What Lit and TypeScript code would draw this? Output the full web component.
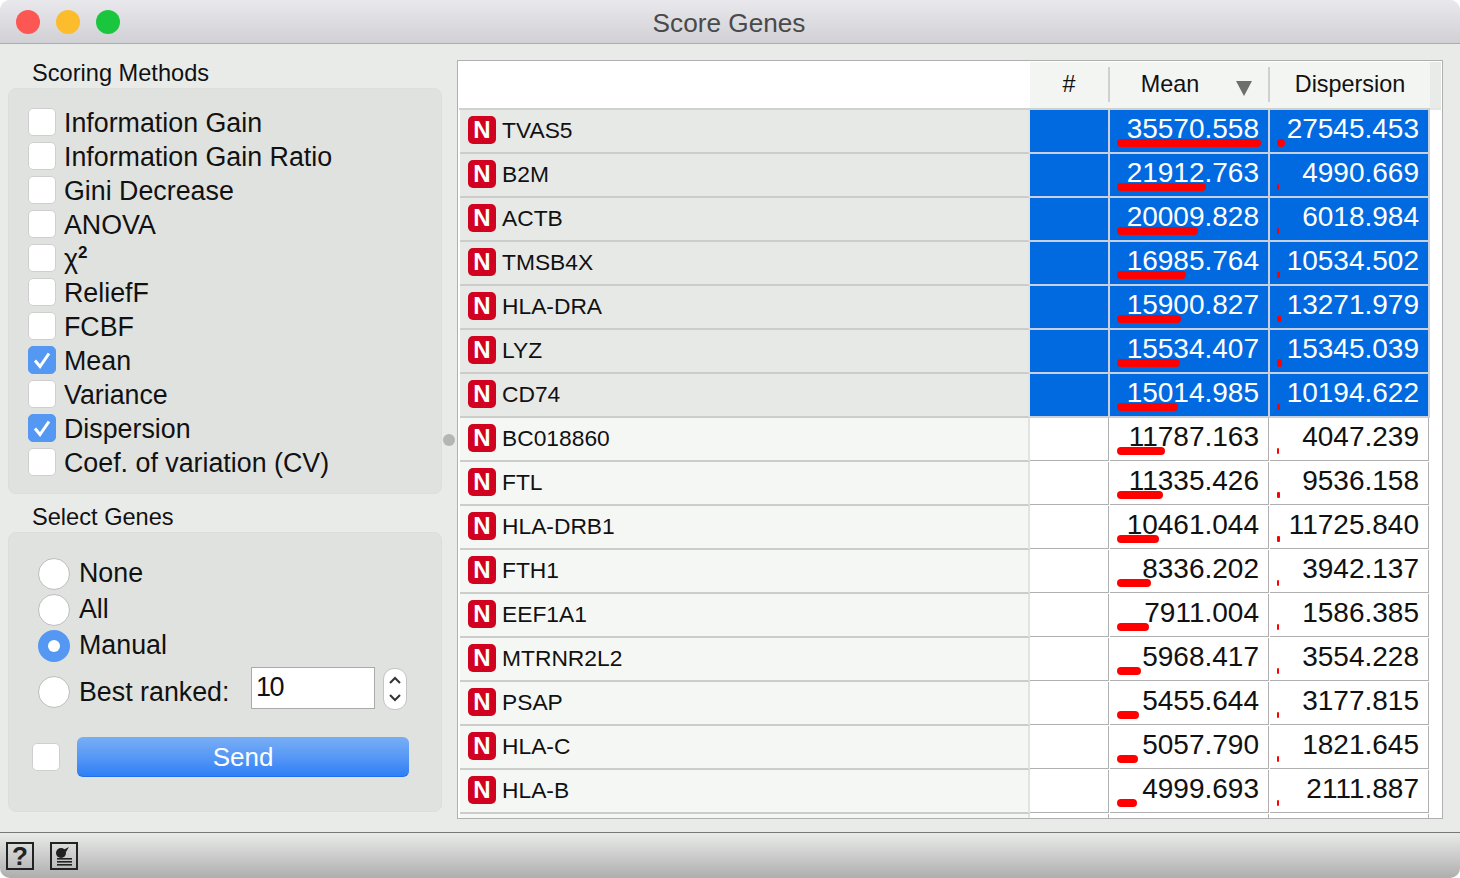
import { LitElement, html, css, svg } from 'lit';
import { customElement } from 'lit/decorators.js';

const METHODS = [
  { label: html`Information Gain`, on: false },
  { label: html`Information Gain Ratio`, on: false },
  { label: html`Gini Decrease`, on: false },
  { label: html`ANOVA`, on: false },
  { label: html`χ<sup>2</sup>`, on: false },
  { label: html`ReliefF`, on: false },
  { label: html`FCBF`, on: false },
  { label: html`Mean`, on: true },
  { label: html`Variance`, on: false },
  { label: html`Dispersion`, on: true },
  { label: html`Coef. of variation (CV)`, on: false },
];

const GENES: [string, number, number][] = [
  ['TVAS5', 35570.558, 27545.453],
  ['B2M', 21912.763, 4990.669],
  ['ACTB', 20009.828, 6018.984],
  ['TMSB4X', 16985.764, 10534.502],
  ['HLA-DRA', 15900.827, 13271.979],
  ['LYZ', 15534.407, 15345.039],
  ['CD74', 15014.985, 10194.622],
  ['BC018860', 11787.163, 4047.239],
  ['FTL', 11335.426, 9536.158],
  ['HLA-DRB1', 10461.044, 11725.84],
  ['FTH1', 8336.202, 3942.137],
  ['EEF1A1', 7911.004, 1586.385],
  ['MTRNR2L2', 5968.417, 3554.228],
  ['PSAP', 5455.644, 3177.815],
  ['HLA-C', 5057.79, 1821.645],
  ['HLA-B', 4999.693, 2111.887],
];

const SELECTED = 7;
const tick = svg`<path d="M7 14.5 L12 20.5 L21 7.5" fill="none" stroke="#fff" stroke-width="3"/>`;

@customElement('app-root')
export class AppRoot extends LitElement {
  static styles = css`
    :host {
      display: block;
      width: 1460px;
      height: 878px;
      background: #fff;
      font-family: "Liberation Sans", Arial, sans-serif;
      color: #111;
    }
    .window {
      height: 878px;
      display: flex;
      flex-direction: column;
      border-radius: 10px;
      overflow: hidden;
      background: #e9ebe9;
    }
    .titlebar {
      height: 43px;
      flex: none;
      box-sizing: content-box;
      display: flex;
      align-items: center;
      justify-content: center;
      position: relative;
      border-bottom: 1px solid #acacac;
      background: linear-gradient(#e9e8ec, #d1d0d5);
      color: #4a4a4a;
      font-size: 26.2px;
    }
    .lights {
      position: absolute;
      left: 16px;
      top: 10px;
      display: flex;
      gap: 16px;
    }
    .lights i {
      width: 24px;
      height: 24px;
      border-radius: 50%;
    }
    .red { background: #fc5753; }
    .amber { background: #fdbc2c; }
    .green { background: #1bc63f; }
    .title { transform: translate(-1px, 2px); }

    .body {
      flex: 1;
      display: flex;
      gap: 15px;
      padding: 16px 17px 0 8px;
      position: relative;
      min-height: 0;
    }
    .left {
      width: 434px;
      flex: none;
    }
    .heading {
      height: 28px;
      line-height: 26px;
      padding-left: 24px;
      font-size: 23.6px;
    }
    .box {
      background: #e0e2df;
      border: 1px solid #dcdedb;
      border-radius: 8px;
      box-sizing: border-box;
    }
    .methods {
      height: 406px;
      padding: 19px 0 0 19px;
      margin-bottom: 10px;
    }
    .select {
      height: 280px;
      padding: 25px 0 0 29px;
    }
    .check {
      height: 34px;
      display: flex;
      gap: 8px;
      font-size: 26.8px;
      line-height: 30px;
    }
    .check sup {
      font-size: 17px;
      line-height: 0;
      font-weight: bold;
    }
    .cb {
      width: 28px;
      height: 28px;
      flex: none;
      box-sizing: border-box;
      background: #fff;
      border: 1px solid #cfcfcf;
      border-radius: 5px;
    }
    .cb.on {
      background: #5598f3;
      border-color: #5598f3;
    }
    .cb svg {
      display: block;
      margin: -1px;
    }
    .radio {
      height: 36px;
      display: flex;
      gap: 9px;
      font-size: 26.8px;
      line-height: 30px;
    }
    .rb {
      width: 32px;
      height: 32px;
      flex: none;
      box-sizing: border-box;
      background: #fff;
      border: 1px solid #bdbdbd;
      border-radius: 50%;
    }
    .rb.on {
      background: #5598f3;
      border: 10px solid #5598f3;
    }
    .rb.on::after {
      content: '';
      display: block;
      width: 12px;
      height: 12px;
      border-radius: 50%;
      background: #fff;
    }
    .best {
      height: 43px;
      margin-top: 1px;
      display: flex;
      align-items: flex-start;
    }
    .best .rb { margin-top: 9px; }
    .best .lbl {
      margin: 10px 0 0 9px;
      width: 172px;
      font-size: 26.8px;
      line-height: 30px;
    }
    .spin {
      width: 124px;
      height: 42px;
      box-sizing: border-box;
      background: #fff;
      border: 3px solid #fff;
      outline: 1px solid #aaa;
      outline-offset: -1px;
      font-size: 27px;
      line-height: 35px;
      padding-left: 2px;
      letter-spacing: -1.5px;
    }
    .stepper {
      width: 24px;
      height: 42px;
      margin: 1px 0 0 8px;
      box-sizing: border-box;
      background: #fff;
      border: 1px solid #c4c4c4;
      border-radius: 11px;
    }
    .stepper svg { display: block; }
    .send {
      display: flex;
      align-items: center;
      gap: 17px;
      margin: 27px 0 0 -6px;
    }
    .btn {
      width: 332px;
      height: 40px;
      box-sizing: border-box;
      border-radius: 6px;
      border-bottom: 1px solid #1f6fee;
      background: linear-gradient(#78aef6, #5b9bf5 45%, #2f7ff6);
      color: #fff;
      font-size: 26px;
      line-height: 40px;
      text-align: center;
    }

    .handle {
      position: absolute;
      left: 443px;
      top: 390px;
      width: 12px;
      height: 12px;
      border-radius: 50%;
      background: #b4b6b4;
    }

    .table {
      width: 986px;
      height: 759px;
      box-sizing: border-box;
      border: 1px solid #b0b0b0;
      padding: 1px;
      background: #fff;
      overflow: hidden;
    }
    .row {
      display: grid;
      grid-template-columns: 571px 80px 160px 160px 1fr;
      height: 44px;
    }
    .head { height: 48px; }
    .head > div {
      box-sizing: border-box;
      height: 48px;
      background: #f3f5f3;
      border-bottom: 2px solid #cfd1cf;
      font-size: 23.4px;
      display: flex;
      align-items: center;
      justify-content: center;
      padding-bottom: 1px;
      position: relative;
    }
    .head > div.blank { background: #fff; }
    .head > div.rest {
      background: #e9ebe9;
      border-bottom: 2px solid #e4e6e4;
    }
    .head > div.num::after {
      content: '';
      position: absolute;
      right: 0;
      top: 5px;
      bottom: 6px;
      width: 2px;
      background: #cfd1cf;
    }
    .hash { transform: translateX(-1px); }
    .mean { margin-right: 40px; }
    .arrow {
      position: absolute;
      left: 126px;
      top: 19px;
      width: 0;
      height: 0;
      border-left: 8px solid transparent;
      border-right: 8px solid transparent;
      border-top: 15px solid #6e6e6e;
    }
    .name {
      box-sizing: border-box;
      background: #f5f7f5;
      border-right: 2px solid #e2e4e2;
      border-bottom: 2px solid #ccc;
      margin-left: 1px;
      display: flex;
      align-items: center;
      gap: 6px;
      padding: 0 0 2px 8px;
      font-size: 22.8px;
    }
    .sel .name { background: #e7e9e7; }
    .n {
      width: 28px;
      height: 28px;
      flex: none;
      box-sizing: border-box;
      background: #d0021f;
      border-radius: 5px;
      color: #fff;
      font-weight: bold;
      font-size: 24px;
      line-height: 28px;
      text-align: center;
    }
    .cell {
      box-sizing: border-box;
      position: relative;
      border-right: 1px solid #b0b0b0;
      border-bottom: 1px solid #b0b0b0;
      margin: 0 1px 1px 0;
      font-size: 28px;
      line-height: 37px;
      text-align: right;
      padding-right: 9px;
    }
    .sel .cell {
      background: #016ae1;
      color: #fff;
      border-right: 2px solid #c8d0dc;
      border-bottom: 2px solid #c8d0dc;
      margin: 0;
      padding-right: 9px;
    }
    .bar {
      position: absolute;
      left: 7px;
      top: 29px;
      height: 8px;
      background: #f00;
      border-radius: 4px;
    }
    .bar.thin {
      height: 6px;
      top: 30px;
      border-radius: 1px;
    }

    .footer {
      height: 46px;
      flex: none;
      display: flex;
      gap: 16px;
      padding: 9px 0 0 6px;
      box-sizing: border-box;
      border-top: 1px solid #777;
      background: linear-gradient(#e9ebe9, #aeaeae);
    }
    .tool {
      width: 28px;
      height: 28px;
      box-sizing: border-box;
      border: 2px solid #222;
      font-weight: bold;
      font-size: 26px;
      line-height: 24px;
      text-align: center;
      color: #222;
    }
    .tool svg { display: block; }
  `;

  renderCell(value: number, width: number) {
    const thin = width < 4;
    return html`<div class="cell">
      ${value.toFixed(3)}
      <span
        class="bar ${thin ? 'thin' : ''}"
        style="width:${Math.max(2, width).toFixed(1)}px"
      ></span>
    </div>`;
  }

  render() {
    return html`
      <div class="window">
        <div class="titlebar">
          <div class="lights"><i class="red"></i><i class="amber"></i><i class="green"></i></div>
          <span class="title">Score Genes</span>
        </div>

        <div class="body">
          <div class="left">
            <div class="heading">Scoring Methods</div>
            <div class="box methods">
              ${METHODS.map(
                (m) => html`<div class="check">
                  <span class="cb ${m.on ? 'on' : ''}">
                    ${m.on ? html`<svg width="28" height="28">${tick}</svg>` : ''}
                  </span>
                  <span>${m.label}</span>
                </div>`
              )}
            </div>

            <div class="heading">Select Genes</div>
            <div class="box select">
              <div class="radio"><span class="rb"></span>None</div>
              <div class="radio"><span class="rb"></span>All</div>
              <div class="radio"><span class="rb on"></span>Manual</div>
              <div class="best">
                <span class="rb"></span>
                <span class="lbl">Best ranked:</span>
                <div class="spin">10</div>
                <div class="stepper">
                  <svg width="22" height="40" fill="none" stroke="#333" stroke-width="2">
                    <path d="M6 14 L11 9 L16 14" />
                    <path d="M6 26 L11 31 L16 26" />
                  </svg>
                </div>
              </div>
              <div class="send">
                <span class="cb"></span>
                <div class="btn">Send</div>
              </div>
            </div>
          </div>

          <div class="handle"></div>

          <div class="table">
            <div class="row head">
              <div class="blank"></div>
              <div class="num"><span class="hash">#</span></div>
              <div class="num"><span class="mean">Mean</span><span class="arrow"></span></div>
              <div>Dispersion</div>
              <div class="rest"></div>
            </div>
            <div class="rows">
              ${GENES.map(
                ([gene, mean, disp], i) => html`<div class="row ${i < SELECTED ? 'sel' : ''}">
                  <div class="name"><span class="n">N</span>${gene}</div>
                  <div class="cell"></div>
                  ${this.renderCell(mean, mean * 0.00405)}
                  ${this.renderCell(disp, (disp / 27545) * 8)}
                </div>`
              )}
              <div class="row">
                <div class="name"></div>
                <div class="cell"></div>
                <div class="cell"></div>
                <div class="cell"></div>
              </div>
            </div>
          </div>
        </div>

        <div class="footer">
          <div class="tool">?</div>
          <div class="tool">
            <svg width="24" height="24" fill="#222">
              <circle cx="9" cy="9" r="5" />
              <path d="M11 6 L17 3 L14 8 Z" />
              <rect x="5" y="14" width="15" height="1.6" />
              <rect x="5" y="17" width="15" height="1.6" />
              <rect x="5" y="20" width="15" height="1.6" />
            </svg>
          </div>
        </div>
      </div>
    `;
  }
}
